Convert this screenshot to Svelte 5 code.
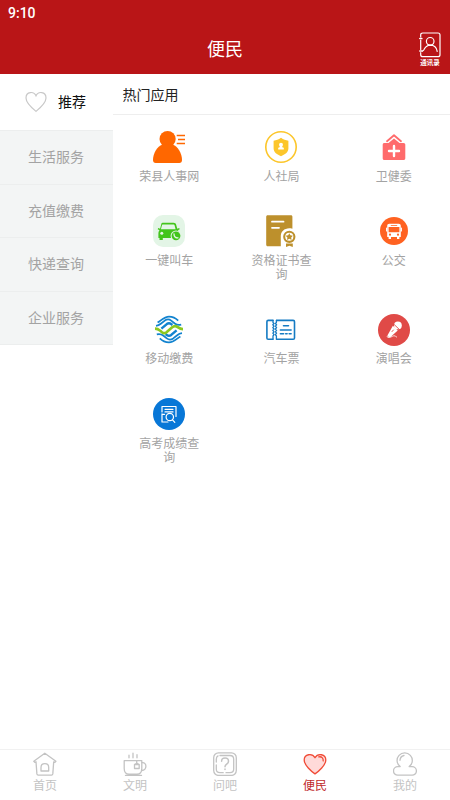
<script>
	let categoriaAtiva = $state(0);
	let abaAtiva = $state('heart');

	const categorias = ['推荐', '生活服务', '充值缴费', '快递查询', '企业服务'];

	const apps = [
		{ nome: '荣县人事网', icone: 'person' },
		{ nome: '人社局', icone: 'shield' },
		{ nome: '卫健委', icone: 'health' },
		{ nome: '一键叫车', icone: 'taxi' },
		{ nome: '资格证书查询', icone: 'cert' },
		{ nome: '公交', icone: 'bus' },
		{ nome: '移动缴费', icone: 'mobile' },
		{ nome: '汽车票', icone: 'ticket' },
		{ nome: '演唱会', icone: 'mic' },
		{ nome: '高考成绩查询', icone: 'exam' }
	];

	const abas = [
		{ nome: '首页', icone: 'home' },
		{ nome: '文明', icone: 'cup' },
		{ nome: '问吧', icone: 'ask' },
		{ nome: '便民', icone: 'heart' },
		{ nome: '我的', icone: 'me' }
	];
</script>

{#snippet appIcon(icone)}
	<svg class="app-icon" viewBox="0 0 32 32" fill="none" stroke-linecap="round" stroke-linejoin="round">
		{#if icone === 'person'}
			<circle cx="14.6" cy="8.1" r="8.1" fill="#ff6700" />
			<path fill="#ff6700" d="M9.5 13.5h10.2c5.2 2.1 9.3 8.8 9.3 15.5 0 2-1 3-2.7 3H2.7C1 32 0 31 0 29c0-6.7 4.1-13.4 9.5-15.5z" />
			<path stroke="#ff6700" stroke-width="1.5" stroke-linecap="butt" d="M23.7 4.5H32M25 8.5h7M23.7 12.4H32" />
		{:else if icone === 'shield'}
			<circle cx="16" cy="16" r="15.2" stroke="#fcc62b" stroke-width="1.6" />
			<path fill="#fcc62b" d="M16 6.8c2.4 1.7 4.8 2.6 7.4 2.9v7.8c0 3.8-3.6 6.1-7.4 7.7-3.8-1.6-7.4-3.9-7.4-7.7V9.7c2.6-.3 5-1.2 7.4-2.9z" />
			<circle cx="16" cy="13.8" r="2" fill="#fff" />
			<path fill="#fff" d="M15 14.5h2l.3 1.8 1.5.5v1.6h-5.6v-1.6l1.5-.5z" />
		{:else if icone === 'health'}
			<path stroke="#ff6b6c" stroke-width="1.8" d="M9 10.2l7-6 7 6" />
			<path fill="#ff6b6c" d="M16 7.6l5.5 4.4h4c1.2 0 1.8.7 1.8 1.8v13.4c0 1.2-.7 1.8-1.8 1.8h-19c-1.2 0-1.8-.7-1.8-1.8V13.8c0-1.2.7-1.8 1.8-1.8h4z" />
			<path stroke="#fff" stroke-width="2.4" d="M16 15v10M11 20h10" />
		{:else if icone === 'taxi'}
			<rect width="32" height="32" rx="10" fill="#e3f5e6" />
			<path fill="#42c51b" d="M9.5 7.7h11c1.5 0 2.3.7 2.6 1.9l1.2 4.1 1.9-.7.5 1.3-1.8 1c.8 1 1.1 2 1.1 3.6v3.4h-3.5V23H9.8v2H6.5v-2H5.4v-4.1c0-1.6.3-2.6 1.1-3.6l-1.8-1 .5-1.3 1.9.7 1.1-4.1c.2-1.2.5-1.9 1.3-1.9z" />
			<path fill="#e3f5e6" d="M9.9 9.4h10.4c.8 0 1.1.3 1.3 1l1 3.8H7.9l1-3.8c.2-.7.4-1 1-1z" />
			<circle cx="8.8" cy="18.3" r="1.5" fill="#e3f5e6" />
			<circle cx="23" cy="20.8" r="5.4" fill="#e3f5e6" />
			<circle cx="23" cy="20.8" r="4.4" fill="#42c51b" />
			<path stroke="#e3f5e6" stroke-width="1.3" d="M21 19c0 2.5 1.5 4 4 3.9" />
		{:else if icone === 'cert'}
			<path fill="#bd902c" d="M2.7.2h23.2c1 0 1.5.6 1.5 1.5v12c-6.4-1.8-12 2.1-11.6 8v9.6H2.7c-1 0-1.5-.6-1.5-1.5V1.7C1.2.8 1.7.2 2.7.2z" />
			<path stroke="#fff" stroke-width="1.8" d="M7 6.7h11.5M7 12.8h7" />
			<circle cx="24.3" cy="21.8" r="5.1" stroke="#bd902c" stroke-width="2.1" />
			<path fill="#bd902c" d="M24.3 18.2l1.1 2.1 2.5.4-1.7 1.8.4 2.4-2.3-1.1-2.3 1.1.4-2.4-1.7-1.8 2.5-.4zM21 28.4h6.8V32l-3.4-1.2L21 32z" />
		{:else if icone === 'bus'}
			<circle cx="16" cy="16" r="14" fill="#ff6221" />
			<path fill="#fff" d="M11.4 8.7h9.2c1.4 0 2.2.8 2.2 2.2v11.2h-1.4v1.8H19v-1.8h-6v1.8h-2.4v-1.8H9.2V10.9c0-1.4.8-2.2 2.2-2.2z" />
			<path stroke="#fff" stroke-width="1.1" d="M8.6 13v3M23.4 13v3" />
			<path fill="#ff6221" d="M10.6 12h10.8v5.2H10.6zM12.8 9.9h6.4v.8h-6.4z" />
			<circle cx="12" cy="19.7" r="1.1" fill="#ff6221" />
			<circle cx="20" cy="19.7" r="1.1" fill="#ff6221" />
		{:else if icone === 'mobile'}
			<g stroke="#1283cf" stroke-width="1.8" stroke-linecap="butt">
				<!-- metade de cima e a mesma rodada 180 graus -->
				{#each [0, 180] as angulo}
					<g transform="rotate({angulo} 16 15.5)">
						<path d="M4.6 8.6C8.4 6.3 11.3 2.6 16 2.6c3.6 0 6.6 1.4 9.2 4" />
						<path d="M3 11.8c2.2-.2 3.3-.8 4.8-2.1l4-3.1c2.2-1.6 4.4-1.6 6.4 0l3.6 2.9c1.6 1.2 3.8 1.7 6.4 1.1" />
						<path stroke-width="2.5" d="M8.4 14.6l5.4-4.5c1.4-1.1 3-1.1 4.4 0l1.2.9" />
					</g>
				{/each}
			</g>
			<path stroke="#8cc820" stroke-width="2.6" stroke-linecap="butt" d="M2 14.6c2.2 0 3.6.7 5 2l2 1.7c1.5 1.2 3 1.2 4.5 0l5.4-4.8c1.9-1.6 4-1.7 5.8-.4 1.5 1.1 2.9 2 5.3 2" />
		{:else if icone === 'ticket'}
			<g stroke="#157bc3" stroke-width="1.6">
				<path d="M8 6.4H3.2c-.8 0-1.3.5-1.3 1.3V24c0 .8.5 1.3 1.3 1.3H8" />
				<path d="M11.6 6.4h16.6c.8 0 1.3.5 1.3 1.3V24c0 .8-.5 1.3-1.3 1.3H11.6" />
				<path stroke-width="1.3" d="M8 6.5v2l1 1-1.2 1.3L9 12.2l-1.2 1.4L9 15l-1.2 1.4L9 17.8l-1.2 1.4L9 20.6 8 22v3M11.4 6.5v2l-1 1 1.2 1.3-1.2 1.4 1.2 1.4-1.2 1.4 1.2 1.4-1.2 1.4 1.2 1.4-1.2 1.4 1 1.4v3" />
				<path d="M18.5 11.7h5M15.4 16h10.7M15.4 19.7h3.2M20.7 19.7h1.4M24.2 19.7h1.9" />
			</g>
		{:else if icone === 'mic'}
			<circle cx="16" cy="16" r="16" fill="#e04a47" />
			<circle cx="19.9" cy="11.4" r="3.9" fill="#fff" />
			<path stroke="#e04a47" stroke-width=".9" d="M15.4 9.8l6.3 6" />
			<path fill="#fff" d="M14.9 11.8l4.8 4.6-7.2 6.5c-1.7.9-3.3-.7-2.5-2.4z" />
			<path stroke="#e04a47" stroke-width=".9" d="M15.4 16l-1.4 1.6" />
			<path stroke="#fff" stroke-width=".8" d="M10.5 21c-2.3 1.2-1.5 2.8.7 2.5 2.5-.3 4-2.3 5.8-1.6 1.2.5.9 1.2 1.6 1.1" />
		{:else if icone === 'exam'}
			<circle cx="16" cy="16" r="16" fill="#0877d7" />
			<g stroke="#fff" stroke-width="1.2">
				<path d="M9 14V8.5h14v10M9 15.8V24h6M12 11.3h8M12 13.9h8M9 16.3h2.6" />
				<circle cx="16.8" cy="19" r="3.7" />
				<path d="M19.5 21.8l2.3 2.5" />
			</g>
		{/if}
	</svg>
{/snippet}

{#snippet tabIcon(icone)}
	<svg class="tab-icon" viewBox="0 0 24 24" fill="none" stroke="currentColor" stroke-width="1.3" stroke-linecap="round" stroke-linejoin="round">
		{#if icone === 'home'}
			<path d="M11.8 1.2L.8 9.3l1 1.1 1.2-.6.9 12.1c.1.8.5 1.2 1.3 1.2h13.3c.8 0 1.2-.4 1.3-1.2l.9-12.1 1.2.6 1-1.1z" />
			<path d="M8 19v-3.6c0-5 7.7-5 7.7 0V19z" />
		{:else if icone === 'cup'}
			<path d="M1.2 8.7h17.6v7.8c0 3.7-1.8 5.7-4.8 5.7H6c-3 0-4.8-2-4.8-5.7zM2.5 23.4h16M6 3.2v2.6M10 1.2v4.6M14 2.7v3.1" />
			<path d="M19 10.7c5.3-.8 5.3 7.9-.5 7.8M13.7 8.7v2.5M11.5 12.5h4.7v4h-4.7zM11.5 12.5l2.2-1.3 2.5 1.3" />
		{:else if icone === 'ask'}
			<rect x=".7" y=".9" width="22.6" height="22.5" rx="4.8" />
			<path d="M7 3.5h10c2.6 0 3.7 1.1 3.7 3.7V17c0 2.6-1.1 3.7-3.7 3.7h-4M10.2 20.7H7c-2.6 0-3.7-1.1-3.7-3.7v-4M3.3 10V7.2c0-1.7.5-2.7 1.7-3.3" />
			<path stroke-width="1.5" d="M8.6 9.2c0-4.2 6.9-4.2 6.9 0 0 3-3.5 2.7-3.5 5.5M12 17v.4" />
		{:else if icone === 'heart'}
			<path fill="#ffdad9" stroke="#f04b36" d="M12 21.9C8.5 19.5 1.2 13.2 1.2 8c0-6 8-7.2 10.8-2.3C14.8.8 22.8 2 22.8 8c0 5.2-7.3 11.5-10.8 13.9z" />
			<path stroke="#f04b36" d="M15.8 4.9c2.8-.7 4.7 1.3 4.4 4" />
		{:else if icone === 'me'}
			<path d="M7.2 14.6a7.6 7.6 0 1 1 9 0h2.9a4.3 4.3 0 0 1 0 8.6H4.8a4.3 4.3 0 0 1 0-8.6z" />
			<path d="M7 8.3c.1-2.5 1.7-4.3 4-4.8" />
		{/if}
	</svg>
{/snippet}

<div class="tela">
	<header>
		<div class="status">9:10</div>
		<div class="titulo">
			<span></span>
			<h1>便民</h1>
			<button class="contatos">
				<svg viewBox="0 0 22 26" fill="none" stroke="#fff" stroke-width="1.2" stroke-linecap="round">
					<path d="M1.7 5V3c0-1.4.7-2 2.1-2h15.1C20.3 1 21 1.6 21 3v19.7c0 1.4-.7 2-2.1 2H3.8c-1.4 0-2.1-.6-2.1-2v-2M1.7 8v9.5" />
					<path stroke-width="1.7" d="M.8 6.5h2M.8 19h2.4" />
					<circle cx="11.2" cy="9.3" r="3.8" />
					<path d="M3.5 19c1.2 0 1.3-1 1.8-2 1.3-2.4 3.1-3.8 5.9-3.9 4 0 6.5 2.8 7 6.3" />
				</svg>
				<span>通讯录</span>
			</button>
		</div>
	</header>

	<main>
		<nav class="lateral">
			{#each categorias as categoria, i}
				<button class:ativa={categoriaAtiva === i} onclick={() => (categoriaAtiva = i)}>
					{#if i === 0}
						<svg viewBox="0 0 22 22" fill="none" stroke="#c8c8c8" stroke-width="1.2">
							<path d="M11 20.4C7.5 17.5 1 12 1 7 1 .2 9 .1 11 4.8 13 .1 21 .2 21 7c0 5-6.5 10.5-10 13.4z" />
						</svg>
					{/if}
					{categoria}
				</button>
			{/each}
		</nav>

		<section>
			<h2>热门应用</h2>
			<div class="grade">
				{#each apps as app}
					<div class="app">
						{@render appIcon(app.icone)}
						<span>{app.nome}</span>
					</div>
				{/each}
			</div>
		</section>
	</main>

	<footer>
		{#each abas as aba}
			<button class:ativa={abaAtiva === aba.icone} onclick={() => (abaAtiva = aba.icone)}>
				{@render tabIcon(aba.icone)}
				<span>{aba.nome}</span>
			</button>
		{/each}
	</footer>
</div>

<style>
	:global(body) {
		background: #fff;
	}

	.tela {
		display: flex;
		flex-direction: column;
		height: 100vh;
		overflow: hidden;
		background: #fff;
		font-family: 'Noto Sans CJK SC', sans-serif;
	}

	button {
		padding: 0;
		border: none;
		background: none;
		font-family: inherit;
		cursor: pointer;
	}

	header {
		height: 74px;
		flex: none;
		background: #b91517;
		color: #fff;
	}

	.status {
		height: 24px;
		padding-left: 8px;
		font: 500 14px/26px Roboto, sans-serif;
	}

	.titulo {
		display: grid;
		grid-template-columns: 1fr auto 1fr;
		align-items: center;
		height: 49px;
	}

	h1 {
		margin: 0;
		font-size: 18px;
		line-height: 49px;
		font-weight: 400;
	}

	.contatos {
		display: flex;
		flex-direction: column;
		align-items: center;
		justify-self: end;
		margin-right: 9px;
		color: #fff;
	}

	.contatos svg {
		width: 22px;
		height: 26px;
	}

	.contatos span {
		font-size: 6.5px;
		line-height: 8px;
		font-weight: 700;
	}

	main {
		display: flex;
		flex: 1;
		min-height: 0;
	}

	.lateral {
		width: 113px;
		flex: none;
	}

	.lateral button {
		display: flex;
		align-items: center;
		justify-content: center;
		box-sizing: border-box;
		width: 100%;
		height: 53.6px;
		padding: 0 1px 2px 0;
		border-bottom: 1px solid #eceeee;
		background: #f3f5f5;
		color: #a3a3a3;
		font-size: 14px;
		line-height: 20px;
	}

	.lateral button:first-child {
		gap: 11px;
		height: 57px;
		padding-right: 2px;
	}

	.lateral button.ativa {
		background: #fff;
		color: #111;
	}

	.lateral svg {
		width: 22px;
		height: 22px;
		padding-top: 2px;
	}

	section {
		flex: 1;
	}

	h2 {
		box-sizing: border-box;
		height: 41px;
		margin: 0;
		padding-left: 9.5px;
		border-bottom: 1px solid #eee;
		color: #222;
		font-size: 14px;
		line-height: 41px;
		font-weight: 400;
	}

	.grade {
		display: grid;
		grid-template-columns: repeat(3, 1fr);
	}

	.app {
		display: flex;
		flex-direction: column;
		align-items: center;
		padding: 16px 0 16.5px;
	}

	.app-icon {
		width: 32px;
		height: 32px;
		overflow: visible;
	}

	.app span {
		width: 62px;
		margin-top: 5.8px;
		color: #a3a3a3;
		font-size: 12px;
		line-height: 14px;
		text-align: center;
	}

	footer {
		display: grid;
		grid-template-columns: repeat(5, 1fr);
		flex: none;
		box-sizing: border-box;
		height: 51px;
		border-top: 1px solid #f1f1f1;
	}

	footer button {
		display: flex;
		flex-direction: column;
		align-items: center;
		padding-top: 2px;
		color: #c3c3c3;
	}

	footer button.ativa {
		color: #c02a2c;
	}

	.tab-icon {
		width: 24px;
		height: 24px;
	}

	footer span {
		font-size: 12px;
		line-height: 17px;
	}
</style>
